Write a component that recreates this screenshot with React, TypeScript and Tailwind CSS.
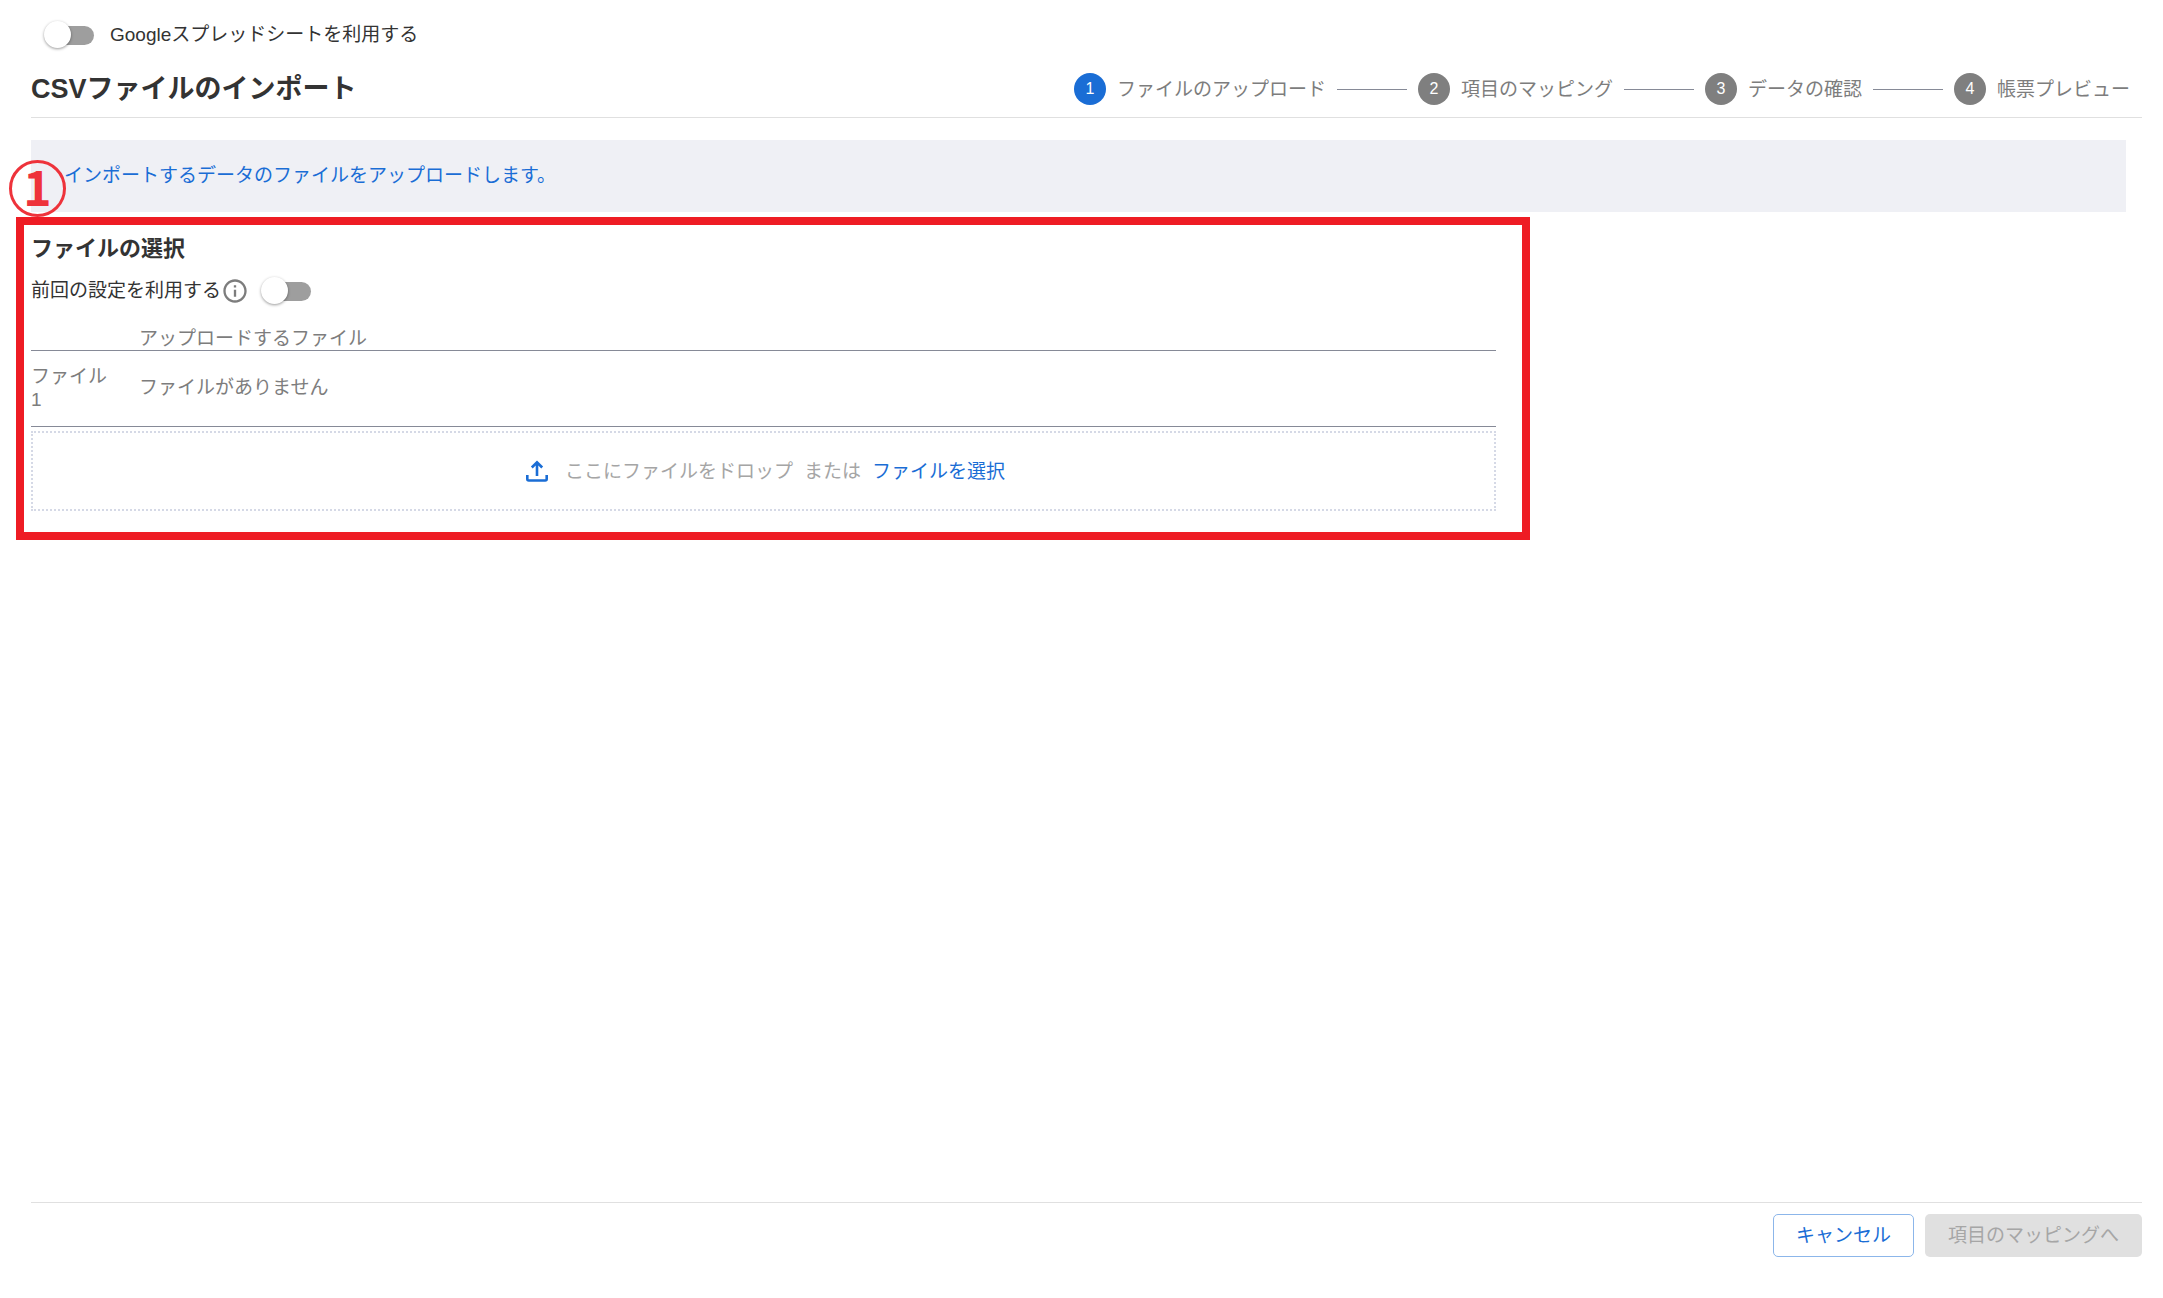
import { useState } from "react";

type Step = {
    id: number;
    label: string;
};

const steps: Step[] = [
    { id: 1, label: 'ファイルのアップロード' },
    { id: 2, label: '項目のマッピング' },
    { id: 3, label: 'データの確認' },
    { id: 4, label: '帳票プレビュー' },
];

type SwitchProps = {
    id: string;
    checked: boolean;
    onChange: (value: boolean) => void;
};

const Switch = ({ id, checked, onChange }: SwitchProps) => (
    <span className="relative inline-flex h-7 w-[50px] shrink-0 items-center justify-end">
        <input
            type="checkbox"
            id={id}
            checked={checked}
            onChange={(e) => onChange(e.target.checked)}
            className="peer h-[19px] w-[47px] cursor-pointer appearance-none rounded-full bg-[#9e9e9e] checked:bg-[#8db6e9]"
        />
        <span className="pointer-events-none absolute left-0 top-0 size-[27px] rounded-full bg-white shadow-[0_1px_3px_rgba(0,0,0,0.4)] peer-checked:left-6 peer-checked:bg-[#1a6dd5]" />
    </span>
);

const InfoIcon = () => (
    <svg viewBox="0 0 24 24" className="size-7 shrink-0 fill-[#7d7d7d]" aria-hidden="true">
        <path d="M11 7h2v2h-2zm0 4h2v6h-2zm1-9C6.48 2 2 6.48 2 12s4.48 10 10 10 10-4.48 10-10S17.52 2 12 2m0 18c-4.41 0-8-3.59-8-8s3.59-8 8-8 8 3.59 8 8-3.59 8-8 8" />
    </svg>
);

const UploadIcon = () => (
    <svg viewBox="0 0 22 22" className="size-[22px] shrink-0 fill-none stroke-[#1a6dd5]" strokeWidth="2.6" aria-hidden="true">
        <path d="M11 16V2.500M5.800 7.500 11 2.300l5.200 5.200" />
        <path d="M1.300 15v4a1.500 1.500 0 0 0 1.500 1.500h16.400a1.500 1.500 0 0 0 1.500-1.500v-4" />
    </svg>
);

const Stepper = ({ current }: { current: number }) => (
    <ol className="flex items-center gap-[11px] pr-3 text-[#7d7d7d]">
        {steps.map((step) => (
            <li key={step.id} className="flex items-center gap-[11px]">
                {step.id > 1 && <span className="h-px w-[70px] bg-[#868a97]" />}
                <span
                    className={`flex size-8 items-center justify-center rounded-full text-base text-white ${step.id === current ? 'bg-[#1a6dd5]' : 'bg-[#7f7f7f]'}`}
                >
                    {step.id}
                </span>
                <span>{step.label}</span>
            </li>
        ))}
    </ol>
);

const App = () => {
    const [useSheet, setUseSheet] = useState<boolean>(false);
    const [usePrevious, setUsePrevious] = useState<boolean>(false);

    return (
        <div className="flex min-h-screen flex-col bg-white pl-[31px] pr-[21px] pt-[21px] font-['Liberation_Sans','Noto_Sans_CJK_JP',sans-serif] text-[19px] leading-[23px] text-[#333333]">
            {/* Google Sheets toggle */}
            <div className="flex items-center gap-4 pl-[13px]">
                <Switch id="use-sheet" checked={useSheet} onChange={setUseSheet} />
                <label htmlFor="use-sheet" className="pb-0.5">Googleスプレッドシートを利用する</label>
            </div>

            {/* Title and steps */}
            <header className="mt-3 flex h-[57px] items-center justify-between border-b border-[#e0e0e0]">
                <h1 className="text-[27px] font-bold leading-8">CSVファイルのインポート</h1>
                <Stepper current={1} />
            </header>

            <p className="mr-4 mt-[22px] flex h-[72px] items-center bg-[#eff0f5] pb-0.5 pl-[33px] text-[#1a6dd5]">
                インポートするデータのファイルをアップロードします。
            </p>

            {/* File selection */}
            <section className="relative -ml-[15px] mt-[5px] w-full max-w-[1514px] border-8 border-[#ee1c24] pb-[21px] pl-[7px] pr-[26px] pt-2">
                <span className="absolute -left-[15px] -top-[65px] flex size-[57px] items-center justify-center rounded-full border-[3px] border-[#ee333b] pb-2 font-['Noto_Sans_CJK_JP',sans-serif] text-5xl font-bold text-[#ee333b]">
                    1
                </span>

                <h2 className="text-[22px] font-bold leading-8">ファイルの選択</h2>

                <div className="mt-3 flex items-center">
                    <label htmlFor="use-previous" className="pb-0.5">前回の設定を利用する</label>
                    <InfoIcon />
                    <span className="ml-3 flex">
                        <Switch id="use-previous" checked={usePrevious} onChange={setUsePrevious} />
                    </span>
                </div>

                <table className="mt-[22px] w-full table-fixed border-collapse text-left text-[#7d7d7d]">
                    <thead>
                        <tr className="border-b border-[#868a97]">
                            <th className="w-[108px]" />
                            <th className="font-normal">アップロードするファイル</th>
                        </tr>
                    </thead>
                    <tbody>
                        <tr className="h-[76px] border-b border-[#868a97]">
                            <td className="pb-0.5 pr-6">ファイル 1</td>
                            <td className="pb-0.5">ファイルがありません</td>
                        </tr>
                    </tbody>
                </table>

                <div className="mt-1 flex h-20 items-center justify-center border-2 border-dotted border-[#d5d9e6] pl-1 text-[#a5a5a5]">
                    <UploadIcon />
                    <span className="ml-[17px]">ここにファイルをドロップ</span>
                    <span className="mx-[11px]">または</span>
                    <button type="button" className="cursor-pointer text-[#1a6dd5]">ファイルを選択</button>
                </div>
            </section>

            <footer className="mt-auto flex h-24 items-start justify-end gap-[11px] border-t border-[#e0e0e0] pt-[11px]">
                <button type="button" className="h-[43px] cursor-pointer rounded-[5px] border border-[#8cb6ea] px-[22px] text-[#1a6dd5]">
                    キャンセル
                </button>
                <button type="button" disabled className="h-[43px] rounded-[5px] bg-[#e0e0e0] px-[23px] text-[#a6a6a6]">
                    項目のマッピングへ
                </button>
            </footer>
        </div>
    );
}

export default App;
